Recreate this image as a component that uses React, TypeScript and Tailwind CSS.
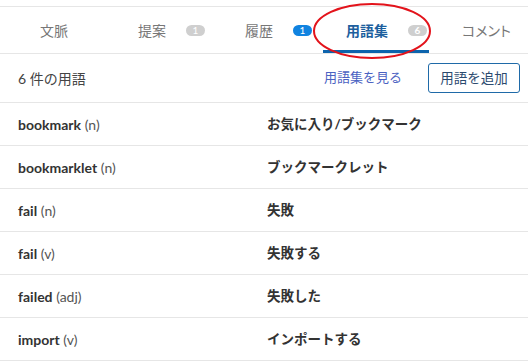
import React from "react";

const terms: [string, string, string][] = [
  ["bookmark", "n", "お気に入り/ブックマーク"],
  ["bookmarklet", "n", "ブックマークレット"],
  ["fail", "n", "失敗"],
  ["fail", "v", "失敗する"],
  ["failed", "adj", "失敗した"],
  ["import", "v", "インポートする"],
];

function Badge({ n, blue }: { n: string; blue?: boolean }) {
  return (
    <span
      className={
        "ml-[20px] inline-flex h-[11px] w-[19px] items-center justify-center rounded-full text-[10px] leading-none text-white " +
        (blue ? "bg-[#1083e0]" : "bg-[#cfcfcf]")
      }
    >
      {n}
    </span>
  );
}

export default function App() {
  return (
    <div
      className="relative h-[361px] w-[528px] overflow-hidden bg-white text-[#333]"
      style={{ fontFamily: "Lato, 'Noto Sans CJK JP', sans-serif" }}
    >
      <div className="h-[6px]" />
      <div className="flex h-[48px] border-y border-[#e6e6e6]">
        <div className="flex w-[107px] items-center pl-[40px] text-[14px] text-[#777]">文脈</div>
        <div className="flex w-[110px] items-center pl-[31px] text-[14px] text-[#777]">
          提案<Badge n="1" />
        </div>
        <div className="flex w-[106px] items-center pl-[28px] text-[14px] text-[#777]">
          履歴<Badge n="1" blue />
        </div>
        <div className="flex w-[106px] items-center border-b-[3px] border-[#0d64ad] pl-[23px] pt-[3px] text-[14px] font-bold text-[#1d5f9e]">
          用語集<Badge n="6" />
        </div>
        <div className="flex flex-1 items-center pl-[33px] text-[14px] text-[#777] [font-feature-settings:'palt']">
          コメント
        </div>
      </div>
      <div className="flex h-[49px] items-center border-b border-[#e6e6e6] pl-[18px] pr-[8px]">
        <div className="flex-1 text-[14px] text-[#444]">6 件の用語</div>
        <div className="mr-[26px] text-[13px] text-[#4b62c2]">用語集を見る</div>
        <button className="flex h-[30px] w-[92px] items-center justify-center rounded-[3px] border border-[#1f6aa8] text-[13.5px] text-[#2b4a6e]">
          用語を追加
        </button>
      </div>
      {terms.map(([en, pos, ja], i) => (
        <div key={i} className="flex h-[43px] items-center border-b border-[#e6e6e6]">
          <div className="w-[267px] pl-[18px] text-[14px]">
            <span className="font-bold text-[#333]">{en}</span>{" "}
            <span className="text-[#555]">({pos})</span>
          </div>
          <div className="text-[13.5px] font-bold text-[#333]">{ja}</div>
        </div>
      ))}
      <svg
        className="pointer-events-none absolute left-[312px] top-[2px]"
        width="120"
        height="58"
        viewBox="0 0 120 58"
      >
        <ellipse cx="60" cy="29" rx="58" ry="27" fill="none" stroke="#e3131b" strokeWidth="2" />
      </svg>
    </div>
  );
}
